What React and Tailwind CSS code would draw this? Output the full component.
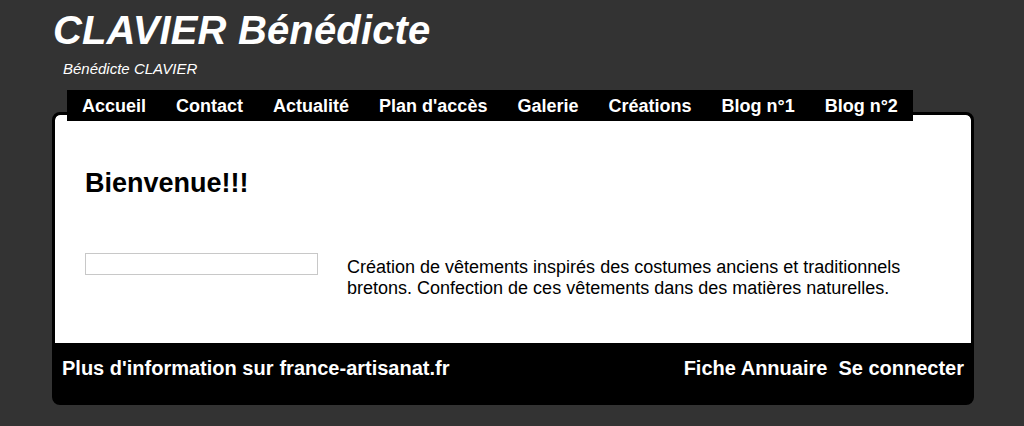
import React from "react"

const menu = ["Accueil", "Contact", "Actualité", "Plan d'accès", "Galerie", "Créations", "Blog n°1", "Blog n°2"]

const App = () => {
    return (
        <div className="min-h-[426px] w-full bg-[#333333] font-['Liberation_Sans',Arial,sans-serif] text-white">
            <div className="w-[922px] ml-[52px]">
                {/* header */}
                <h1 className="pt-[7px] pl-[1px] text-[40px] leading-[46px] font-bold italic tracking-[0.15px]">CLAVIER Bénédicte</h1>
                <p className="mt-[7px] pl-[11px] text-[15px] leading-[17px] italic">Bénédicte CLAVIER</p>

                {/* menu */}
                <nav className="relative z-10 mt-[13px] ml-[15px] flex w-fit bg-black">
                    {menu.map(item => (
                        <a key={item} className="px-[15px] pt-[6px] pb-[4px] text-[18px] leading-[21px] font-bold">{item}</a>
                    ))}
                </nav>

                {/* main box */}
                <div className="-mt-[9px] rounded-[8px] border-[3px] border-black bg-black overflow-hidden">
                    <div className="bg-white text-black rounded-t-[5px] pl-[30px] pr-[30px] pt-[53px] pb-[44px]">
                        <h2 className="text-[27px] leading-[31px] font-bold">Bienvenue!!!</h2>
                        <div className="mt-[57px] flex items-start gap-[29px]">
                            <div className="w-[233px] h-[22px] border border-[#c8c8c8] shrink-0 -mt-[3px]"></div>
                            <p className="mt-[1px] text-[18px] leading-[21px] w-[600px]">
                                Création de vêtements inspirés des costumes anciens et traditionnels bretons. Confection de ces vêtements dans des matières naturelles.
                            </p>
                        </div>
                    </div>

                    {/* footer */}
                    <div className="flex justify-between px-[7px] pt-[14px] pb-[22px] text-[20px] leading-[23px] font-bold">
                        <div className="flex gap-[6px]">
                            <span>Plus d'information sur</span>
                            <a>france-artisanat.fr</a>
                        </div>
                        <div className="flex gap-[11px]">
                            <a>Fiche Annuaire</a>
                            <a>Se connecter</a>
                        </div>
                    </div>
                </div>
            </div>
        </div>
    )
}

export default App
